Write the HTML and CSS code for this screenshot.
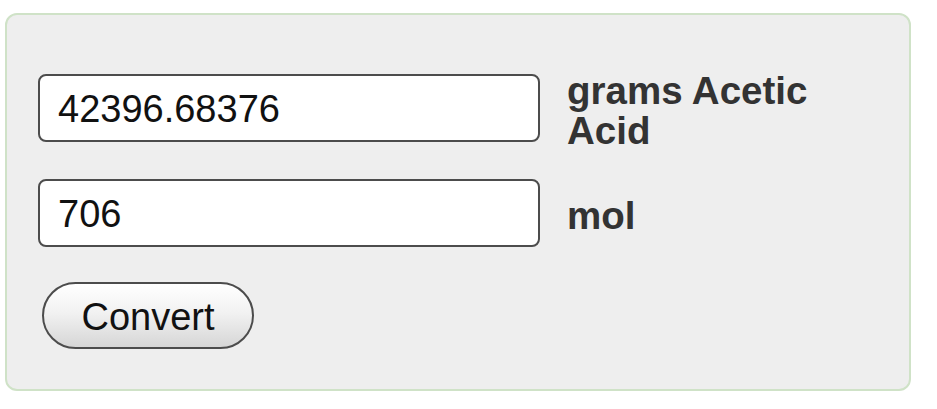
FILE: index.html
```html
<!DOCTYPE html>
<html lang="en">
<head>
<meta charset="utf-8">
<title>Convert grams Acetic Acid to mol</title>
<link rel="stylesheet" href="styles.css">
</head>
<body>
<form class="panel">
  <div class="row">
    <input class="field" type="text" value="42396.68376">
    <label class="unit">grams Acetic Acid</label>
  </div>
  <div class="row row-second">
    <input class="field" type="text" value="706">
    <label class="unit">mol</label>
  </div>
  <div class="actions">
    <button class="convert" type="button">Convert</button>
  </div>
</form>
</body>
</html>
```
FILE: styles.css
```css
html, body {
  margin: 0;
  padding: 0;
  background: #ffffff;
}

body {
  font-family: "Liberation Sans", Arial, Helvetica, sans-serif;
}

.panel {
  box-sizing: border-box;
  width: 906px;
  height: 378px;
  margin: 13px 0 0 5px;
  padding: 53px 0 0 31px;
  background: #eeeeee;
  border: 2px solid #cfe2c7;
  border-radius: 12px;
  display: flex;
  flex-direction: column;
}

.row {
  display: flex;
  align-items: center;
  gap: 27px;
}

.row-second {
  margin-top: 31px;
}

.field {
  box-sizing: border-box;
  width: 502px;
  height: 68px;
  margin: 0;
  padding: 2px 0 0 18px;
  border: 2px solid #4c4c4c;
  border-radius: 8px;
  background: #ffffff;
  font-family: "Liberation Sans", Arial, Helvetica, sans-serif;
  font-size: 38px;
  color: #111111;
  outline: none;
}

.unit {
  width: 300px;
  padding-top: 3px;
  margin-bottom: -3px;
  font-size: 38.5px;
  line-height: 40px;
  font-weight: bold;
  color: #333333;
}

.actions {
  margin-top: 35px;
  padding-left: 4px;
}

.convert {
  box-sizing: border-box;
  width: 212px;
  height: 67px;
  margin: 0;
  padding: 3px 0 0 0;
  border: 2px solid #4c4c4c;
  border-radius: 34px;
  background: linear-gradient(to bottom, #ffffff 0%, #f2f2f2 45%, #d6d6d6 100%);
  font-family: "Liberation Sans", Arial, Helvetica, sans-serif;
  font-size: 38px;
  color: #111111;
  cursor: pointer;
}
```
